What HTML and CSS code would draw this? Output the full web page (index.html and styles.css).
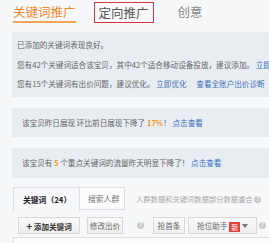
FILE: index.html
```html
<!DOCTYPE html>
<html lang="zh">
<head>
<meta charset="utf-8">
<link rel="stylesheet" href="styles.css">
</head>
<body>
<div class="page">
  <div class="tabs">
    <div class="tab tab-active">关键词推广</div>
    <div class="tab tab-boxed">定向推广</div>
    <div class="tab tab-plain">创意</div>
  </div>

  <div class="box box-info">
    <div class="line">已添加的关键词表现良好。</div>
    <div class="line">您有42个关键词适合该宝贝，其中42个适合移动设备投放，建议添加。 <a class="link">立即添加</a></div>
    <div class="line">您有15个关键词有出价问题，建议优化。 <a class="link">立即优化</a> <a class="link link-gap">查看全账户出价诊断</a></div>
  </div>

  <div class="box box-alert">该宝贝昨日展现 环比前日展现下降了 <span class="num">17%</span>！ <a class="link">点击查看</a></div>

  <div class="box box-alert box-alert2">该宝贝有 <span class="num">5</span> 个重点关键词的流量昨天明显下降了！ <a class="link">点击查看</a></div>

  <div class="subtabs">
    <div class="subtab subtab-active">关键词（24）</div>
    <div class="subtab subtab-other">搜索人群</div>
    <div class="hint">人群数据和关键词数据部分数据重合 <span class="q">?</span></div>
  </div>

  <div class="toolbar">
    <div class="btn btn-main"><span class="plus">+</span> 添加关键词</div>
    <div class="btn btn-edit">修改出价</div>
    <span class="q q-tool">?</span>
    <div class="btn btn-first">抢首条</div>
    <div class="btn btn-helper">抢位助手 <span class="badge">新</span> <span class="caret"></span></div>
    <span class="q q-tool">?</span>
  </div>

  <div class="table"></div>
</div>
</body>
</html>
```

FILE: styles.css
```css
html, body {
  margin: 0;
  padding: 0;
  overflow: hidden;
  background: #f7f8fa;
}

body {
  font-family: "Noto Sans CJK SC", "Liberation Sans", sans-serif;
  color: #666;
}

.page {
  width: 340px;
  padding-left: 12px;
}

.tabs {
  display: flex;
  align-items: flex-start;
  padding-top: 2px;
  height: 30px;
}

.tab {
  font-size: 12.5px;
  line-height: 16px;
  white-space: nowrap;
}

.tab-active {
  margin-left: 1px;
  color: #f0872a;
  padding: 2px 0 1px;
  border-bottom: 2px solid #f2a55a;
}

.tab-boxed {
  margin-left: 18px;
  color: #555;
  border: 1px solid #cf3a3f;
  padding: 2px 4px 1px;
}

.tab-plain {
  margin-left: 24px;
  color: #888;
  padding-top: 2px;
}

.box {
  background: #e8edf2;
  font-size: 7.6px;
  color: #666;
  white-space: nowrap;
  overflow: hidden;
}

.box-info {
  padding: 3px 0 3px 5px;
  line-height: 19.5px;
}

.link {
  color: #3a70b8;
}

.link-gap {
  margin-left: 8px;
}

.num {
  color: #f39a2e;
  font-weight: bold;
}

.box-alert {
  margin-top: 11px;
  padding-left: 10px;
  line-height: 29px;
  height: 29px;
}

.box-alert2 {
  height: 30px;
  line-height: 30px;
}

.subtabs {
  display: flex;
  align-items: stretch;
  margin-top: 9px;
  height: 24px;
}

.subtab {
  font-size: 7.8px;
  line-height: 24px;
  white-space: nowrap;
  border: 1px solid #dcdfe3;
  border-bottom: none;
  box-sizing: border-box;
}

.subtab-active {
  margin-left: 1px;
  width: 67px;
  padding-left: 9px;
  color: #222;
  font-weight: bold;
  background: #f7f8fa;
}

.subtab-other {
  width: 45px;
  padding-left: 8px;
  border-left: none;
  color: #777;
  background: #fbfbfc;
  border-bottom: 1px solid #dcdfe3;
  height: 23px;
  line-height: 22px;
}

.hint {
  margin-left: 11px;
  font-size: 7.3px;
  line-height: 24px;
  color: #a8a8a8;
  white-space: nowrap;
}

.q {
  display: inline-block;
  width: 7px;
  height: 7px;
  border-radius: 50%;
  background: #c8c8c8;
  color: #fff;
  font-size: 5.5px;
  line-height: 7px;
  text-align: center;
  font-weight: bold;
  vertical-align: middle;
}

.toolbar {
  display: flex;
  align-items: center;
  margin-top: 6px;
  padding-left: 6px;
  height: 17px;
}

.btn {
  box-sizing: border-box;
  height: 17px;
  border: 1px solid #d8d8d8;
  background: linear-gradient(#fafafa, #eeeeee);
  font-size: 7.6px;
  line-height: 15px;
  color: #666;
  text-align: center;
  white-space: nowrap;
}

.btn-main {
  width: 62px;
  color: #333;
  font-weight: bold;
}

.plus {
  font-size: 10px;
  font-weight: bold;
}

.btn-edit {
  width: 36px;
  margin-left: 7px;
}

.q-tool {
  margin-left: 14px;
}

.btn-first {
  width: 32px;
  margin-left: 9px;
}

.btn-helper {
  width: 69px;
  margin-left: 3px;
}

.badge {
  display: inline-block;
  background: #e8413b;
  color: #fff;
  font-size: 7px;
  line-height: 10px;
  width: 11px;
  height: 10px;
  vertical-align: -1px;
}

.caret {
  display: inline-block;
  width: 0;
  height: 0;
  border-left: 3px solid transparent;
  border-right: 3px solid transparent;
  border-top: 4px solid #777;
  vertical-align: 1px;
}

.btn-helper + .q-tool {
  margin-left: 2px;
}

.table {
  margin-top: 3px;
  margin-left: 1px;
  height: 20px;
  border-top: 1px solid #dcdfe3;
  border-left: 1px solid #dcdfe3;
  background: #fbfbfc;
}
```
